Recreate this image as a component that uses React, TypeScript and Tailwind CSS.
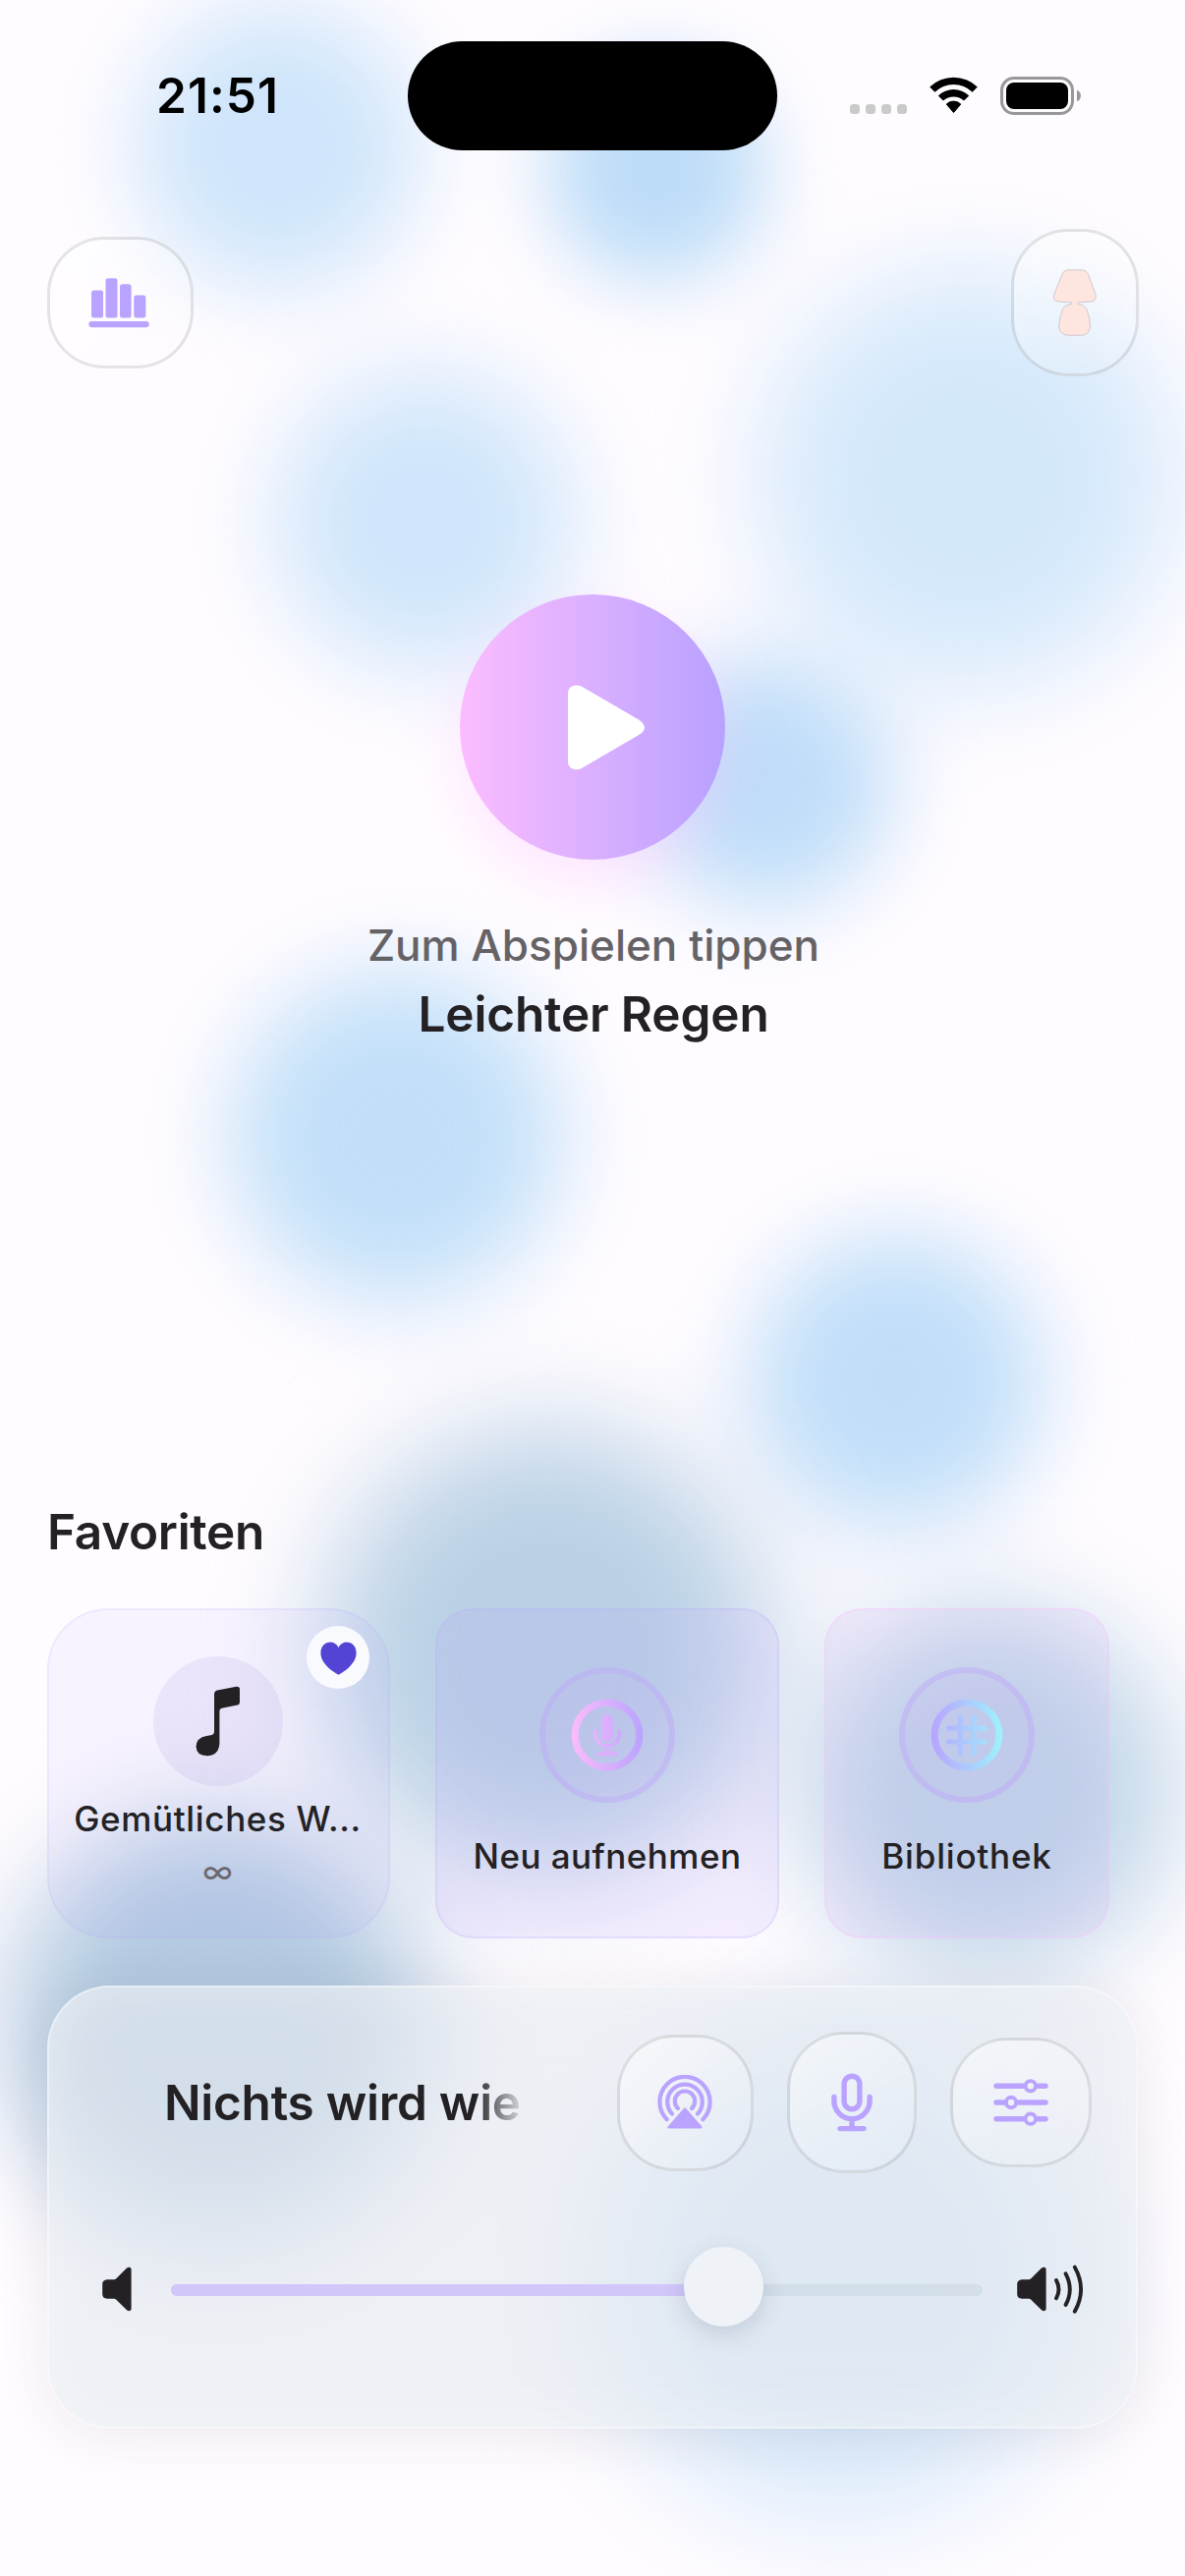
import React from "react";

const blobs = [
  "left-[137px] top-[4px] size-[290px] bg-[#cfe5fb] blur-[46px]",
  "left-[556px] top-[62px] size-[224px] bg-[#bddcf8] blur-[40px]",
  "left-[772px] top-[276px] size-[424px] bg-[#d4e8fb] blur-[56px]",
  "left-[280px] top-[378px] size-[304px] bg-[#cfe5fb] blur-[50px]",
  "left-[652px] top-[668px] size-[256px] bg-[#bfddf9] blur-[44px]",
  "left-[234px] top-[988px] size-[338px] bg-[#c2dff9] blur-[48px]",
  "left-[762px] top-[1256px] size-[300px] bg-[#c1def9] blur-[46px]",
  "left-[328px] top-[1454px] size-[456px] bg-[#b9d0e5] blur-[60px]",
  "left-[816px] top-[1633px] size-[378px] bg-[#bfd5e8] blur-[54px]",
  "left-[6px] top-[1850px] size-[430px] bg-[#b3cae1] blur-[54px]",
  "left-[607px] top-[2064px] size-[498px] bg-[#d6e8fa] blur-[64px]",
];

function Background() {
  return (
    <div className="absolute inset-0" aria-hidden="true">
      {blobs.map((c) => (
        <div key={c} className={"absolute rounded-full " + c} />
      ))}
    </div>
  );
}

function StatusBar() {
  return (
    <header className="grid h-[112px] grid-cols-[415px_376px_415px] items-center text-black">
      <div className="pl-[159px] text-[49.5px] leading-[60px] font-semibold tracking-[1.1px]">21:51</div>
      <div className="h-[111px] rounded-full bg-black" />
      <div className="flex items-center pl-[74px]">
        <div className="mt-[27px] flex gap-[6px]">
          {[0, 1, 2, 3].map((i) => (
            <span key={i} className="size-[10px] rounded-[3.5px] bg-[#cacaca]" />
          ))}
        </div>
        <svg className="ml-[22px] h-[38px] w-[51px]" viewBox="0 0 51 38">
          <path d="M1.2 10.6a35 35 0 0 1 48.6 0L44.6 15.8a27.5 27.5 0 0 0-38.2 0Z" />
          <path d="M9.8 19.4a22.6 22.6 0 0 1 31.4 0L36 24.6a15.2 15.2 0 0 0-21 0Z" />
          <path d="M18.2 28a10.6 10.6 0 0 1 14.6 0L25.5 36.6Z" stroke="#000" strokeWidth="1" strokeLinejoin="round" />
        </svg>
        <div className="ml-[22px] h-[39px] w-[75px] rounded-[14px] border-[3px] border-[#989799] p-[3px]">
          <div className="h-full w-full rounded-[8px] bg-black" />
        </div>
        <svg className="ml-[3px] h-[13px] w-[4px]" viewBox="0 0 4 13">
          <path d="M0 0.5C5.3 3 5.3 10 0 12.5Z" fill="#989799" />
        </svg>
      </div>
    </header>
  );
}

function ChartIcon() {
  return (
    <svg className="mr-[3px] h-[51px] w-[62px]" viewBox="0 0 62 51" fill="#b9a3ff">
      <rect x="3" y="12.5" width="12" height="28" rx="2.5" />
      <rect x="17.5" y="0.3" width="12" height="40.2" rx="2.5" />
      <rect x="32" y="6.3" width="11.6" height="34.2" rx="2.5" />
      <rect x="46.3" y="17.5" width="12" height="23" rx="2.5" />
      <rect x="0.3" y="44" width="61.4" height="6.2" rx="3.1" />
    </svg>
  );
}

function LampIcon() {
  return (
    <svg className="h-[68px] w-[44px]" viewBox="0 0 44 68" fill="#fee5e0" stroke="#cfc9ce" strokeWidth="1">
      <path d="M14 .8H30Q33.5 1.2 35.5 5L43 25.5Q44.6 32 38.5 33L25 33.8V35.8Q32 35.8 34.2 41.5Q37.4 50 37.6 58Q36.5 66.5 29.5 67.2H14Q7 66.5 5.6 58.5Q6 50 9.2 41.5Q11.5 35.8 18.5 35.8V33.8L5 33Q-1 32 .9 25.5L9 5Q10.8 1.2 14 .8Z" />
    </svg>
  );
}

function RingIcon({ kind }: { kind: "mic" | "hash" }) {
  const id = "ring-" + kind;
  const paint = "url(#" + id + ")";
  return (
    <div className="flex size-[138px] items-center justify-center rounded-full border-[6px] border-[#bba5f8]/40 bg-[#c4a8f5]/10">
      <svg className="size-[74px]" viewBox="0 0 74 74" fill="none">
        <defs>
          <linearGradient id={id} gradientUnits="userSpaceOnUse" x1="0" y1="0" x2="74" y2="0">
            <stop stopColor={kind === "mic" ? "#fbbcfb" : "#b8a2ff"} />
            <stop offset="1" stopColor={kind === "mic" ? "#b9a2ff" : "#9ef3fc"} />
          </linearGradient>
        </defs>
        <circle cx="37" cy="37" r="32.8" stroke={paint} strokeWidth="7.2" />
        {kind === "mic" ? (
          <g stroke={paint} strokeLinecap="round" fill="none">
            <rect x="31" y="16.2" width="12" height="27.5" rx="6" fill={paint} stroke="none" />
            <path d="M24.8 33V36a12.2 12.2 0 0 0 24.4 0V33M37 48V55" strokeWidth="3.8" />
            <path d="M28.5 56H45.6" strokeWidth="4.4" stroke="#dab0fd" />
          </g>
        ) : (
          <path
            d="M30.4 19V55.6M44.2 19V55.6M19 30.2H54.8M19 44H54.8"
            stroke={paint}
            strokeWidth="5.2"
            strokeLinecap="round"
          />
        )}
      </svg>
    </div>
  );
}

function NoteIcon() {
  return (
    <svg className="h-[72px] w-[46px]" viewBox="0 0 46 72" fill="#232124">
      <path d="M19 8.5Q19 5.3 22 4.4L41.5.7Q45 .3 45 3.4V16.5Q45 19 42.4 19.6L26.5 22.8Q24.4 23.4 24.4 25.4V58Q24.2 70.5 12 71.3Q.8 71 .6 61.8Q.8 52.8 11 51L16.5 50Q19 49.3 19 46.6Z" />
    </svg>
  );
}

function Favorites() {
  return (
    <section>
      <h2 className="mt-[462px] ml-[48px] h-[60px] text-[49.5px] leading-[60px] font-semibold tracking-[-0.3px]">Favoriten</h2>
      <div className="mt-[48px] ml-[48px] flex gap-[46px]">
        <div className="relative flex h-[336px] w-[349px] flex-col items-center rounded-[62px] border-[2px] border-[#b0a0f5]/14 bg-[#a08fff]/8 pt-[47px] pr-[2px]">
          <div className="flex size-[132px] items-center justify-center rounded-full bg-[#ac98e0]/17">
            <NoteIcon />
          </div>
          <div className="mt-[11px] h-[44px] text-[35px] leading-[44px] font-medium whitespace-nowrap tracking-[0.65px]">Gemütliches W...</div>
          <div className="mt-[12px] h-[40px] text-[33px] leading-[40px] text-[#6b686d]">∞</div>
          <div className="absolute top-[16px] right-[19px] flex size-[64px] items-center justify-center rounded-full bg-[#f8fafd]">
            <svg className="mt-[1px] h-[34px] w-[37px]" viewBox="0 0 37 34" fill="#5344d6">
              <path d="M18.5 33.5Q17 33.3 13 30.3C5 24.4.4 18.4.4 11.2C.4 5 4.6.5 10 .5C13.8.5 16.8 2.4 18.5 6C20.2 2.4 23.2.5 27 .5C32.4.5 36.6 5 36.6 11.2C36.6 18.4 32 24.4 24 30.3Q20 33.3 18.5 33.5Z" />
            </svg>
          </div>
        </div>
        <div className="flex h-[336px] w-[350px] flex-col items-center rounded-[38px] border-[2px] border-[#b9a2ff]/22 bg-[#bc9cff]/14 pt-[58px]">
          <RingIcon kind="mic" />
          <div className="mt-[32px] h-[44px] text-[35px] leading-[44px] font-medium whitespace-nowrap tracking-[0.45px]">Neu aufnehmen</div>
        </div>
        <div className="flex h-[336px] w-[290px] flex-col items-center rounded-[38px] border-[2px] border-[#fbbcff]/30 bg-[#cfa0f5]/12 pt-[58px]">
          <RingIcon kind="hash" />
          <div className="mt-[32px] h-[44px] text-[35px] leading-[44px] font-medium whitespace-nowrap tracking-[0.8px]">Bibliothek</div>
        </div>
      </div>
    </section>
  );
}

const glass =
  "flex items-center justify-center rounded-[58px] border-[3px] border-black/10 bg-linear-to-br from-white/50 to-white/5";

function Speaker({ waves }: { waves?: boolean }) {
  return (
    <svg className={waves ? "h-[50px] w-[68px]" : "h-[50px] w-[30px]"} viewBox={waves ? "0 0 68 50" : "0 0 30 50"}>
      <path
        d="M5 15.2H12Q13.2 15.2 14 14.4L25 3.6Q26.4 2.6 28 2.8Q29.6 3.2 29.6 5V45Q29.6 46.8 28 47.1Q26.4 47.4 25 46.2L14 35.5Q13.2 34.8 12 34.8H5Q.2 34.4.2 30V20Q.2 15.6 5 15.2Z"
        fill="#232124"
      />
      {waves && (
        <path
          d="M40 16Q45 25.2 40 34.4M49.6 9.3Q58 25.2 49.6 41M58.8 2.6Q71.4 25.2 58.8 47.8"
          fill="none"
          stroke="#232124"
          strokeWidth="3.9"
          strokeLinecap="round"
        />
      )}
    </svg>
  );
}

function Player() {
  return (
    <section className="mt-[48px] ml-[48px] h-[451px] w-[1110px] rounded-[64px] border-[2px] border-white/45 bg-[#e5e9f0]/64 pt-[45px] shadow-[0_6px_54px_rgba(50,30,45,0.09),inset_0_0_50px_rgba(255,255,255,0.3)] backdrop-blur-[30px]">
      <div className="flex h-[144px] items-center pl-[117px]">
        <div className="h-[70px] w-[364px] overflow-hidden mask-r-from-[316px] mask-r-to-[370px] text-[49.5px] leading-[70px] font-semibold tracking-[-0.25px] whitespace-nowrap">
          Nichts wird wie
        </div>
        <div className="ml-[97px] flex items-center gap-[34px]">
          <div className={"h-[139px] w-[139px] " + glass}>
            <svg className="mr-px h-[56px] w-[56px]" viewBox="0 0 56 56" fill="none" stroke="#b9a3ff" strokeWidth="4.2" strokeLinecap="round">
              <path d="M9.6 45.2A25.6 25.6 0 1 1 46.4 45.2M15 39.6A17.8 17.8 0 1 1 41 39.6M20.9 34A10.2 10.2 0 1 1 35.1 34" />
              <path d="M28 34.5L44.5 53.2H11.5Z" fill="#b9a3ff" strokeWidth="2.4" strokeLinejoin="round" />
            </svg>
          </div>
          <div className={"h-[144px] w-[132px] " + glass}>
            <svg className="h-[60px] w-[44px]" viewBox="0 0 44 60" fill="none" stroke="#b9a3ff" strokeWidth="5.4" strokeLinecap="round">
              <rect x="14.1" y="3.2" width="15.8" height="33.6" rx="7.9" />
              <path d="M3.9 24.5V28.5a18.1 18.1 0 0 0 36.2 0V24.5M22 47V56M10 56.6H34" />
            </svg>
          </div>
          <div className={"h-[132px] w-[144px] " + glass}>
            <svg className="mr-px h-[50px] w-[56px]" viewBox="0 0 56 50" fill="none" stroke="#b9a3ff" strokeWidth="5.4" strokeLinecap="round">
              <path d="M3 8.3H30M46 8.3H53M3 25H12M26 25H53M3 41.7H30M46 41.7H53" />
              <g strokeWidth="3.9">
                <circle cx="37.8" cy="8.3" r="5.2" />
                <circle cx="18" cy="25" r="5.2" />
                <circle cx="37.8" cy="41.7" r="5.2" />
              </g>
            </svg>
          </div>
        </div>
      </div>
      <div className="mt-[75px] flex h-[82px] items-center pl-[54px]">
        <div className="mt-[4px]">
          <Speaker />
        </div>
        <div className="relative ml-[40px] flex h-[82px] w-[826px] items-center">
          <div className="mt-[6px] flex h-[12px] w-full overflow-hidden rounded-full bg-[#8a9aab]/14">
            <div className="w-[560px] bg-[#d2c6fa]" />
          </div>
          <div className="absolute top-0 left-[522px] size-[81px] rounded-full bg-[#eff3f8] shadow-[0_8px_24px_rgba(40,50,80,0.16)]" />
        </div>
        <div className="mt-[4px] ml-[35px]">
          <Speaker waves />
        </div>
      </div>
    </section>
  );
}

export default function App() {
  return (
    <div className="relative h-[2622px] w-[1206px] overflow-hidden bg-[#fffcff] font-[Inter,sans-serif] text-[#232124]">
      <Background />
      <main className="relative pt-[41px]">
        <StatusBar />
        <div className="mt-[80px] flex items-center justify-between pr-[47px] pl-[48px]">
          <button className={"h-[134px] w-[149px] " + glass}>
            <ChartIcon />
          </button>
          <button className={"h-[150px] w-[130px] " + glass}>
            <LampIcon />
          </button>
        </div>
        <div className="mt-[222px] flex flex-col items-center">
          <button className="flex size-[270px] items-center justify-center rounded-full bg-linear-to-r from-[#fcbcff] to-[#b8a1ff] shadow-[0_24px_60px_rgba(251,188,255,0.34)]">
            <svg className="ml-[27px] h-[87px] w-[78px]" viewBox="0 0 78 87" fill="#fff">
              <path d="M0 8.5C0 2 6.5-1.2 13.5 1.5L71.5 35.2Q78 39.2 78 43.4Q78 47.6 71.5 51.4L13.5 85.2C6.5 88 0 84.8 0 78.2Z" />
            </svg>
          </button>
          <p className="mt-[52px] ml-[2px] h-[70px] text-[44px] leading-[70px] font-medium tracking-[0.03px] whitespace-nowrap text-[#656266]">Zum Abspielen tippen</p>
          <h1 className="ml-[2px] h-[70px] text-[49.5px] leading-[70px] font-semibold tracking-[-0.15px] whitespace-nowrap">Leichter Regen</h1>
        </div>
        <Favorites />
        <Player />
      </main>
    </div>
  );
}
